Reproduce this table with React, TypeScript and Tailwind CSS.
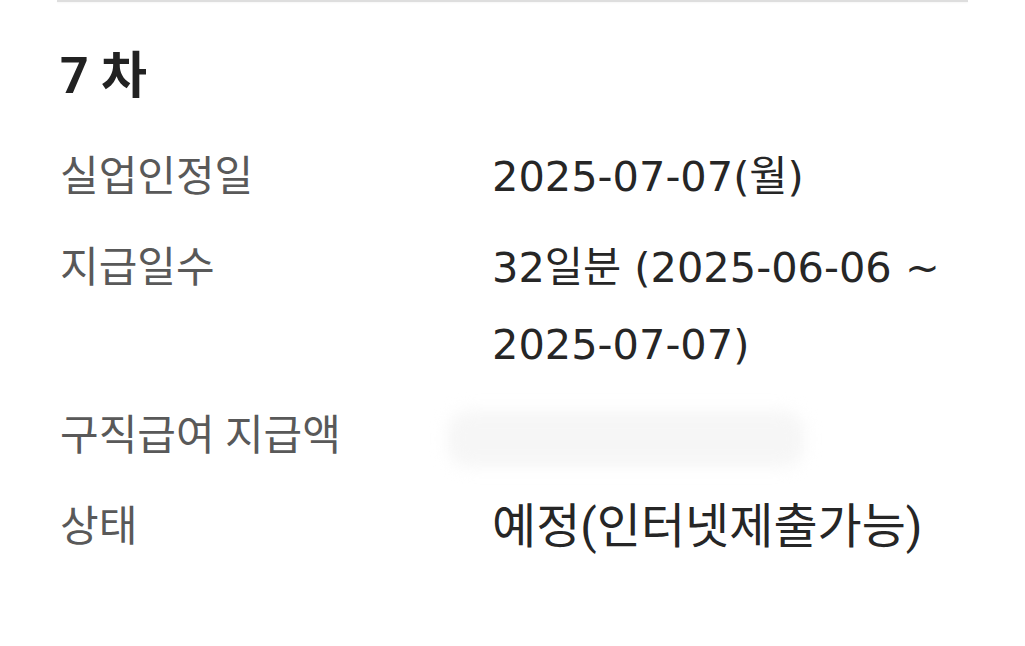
export default function App() {
  const rows: { label: string; value: React.ReactNode; big?: boolean; hidden?: boolean }[] = [
    { label: "실업인정일", value: "2025-07-07(월)" },
    {
      label: "지급일수",
      value: (
        <>
          32일분 (2025-06-06 ~
          <br />
          2025-07-07)
        </>
      ),
    },
    { label: "구직급여 지급액", value: "", hidden: true },
    { label: "상태", value: "예정(인터넷제출가능)", big: true },
  ];

  return (
    <div
      className="min-h-[646px] w-[1025px] bg-white"
      style={{ fontFamily: 'Roboto, "Noto Sans CJK KR", sans-serif' }}
    >
      <div className="mx-[57px] border-t-2 border-[#dedede] shadow-[0_1px_2px_rgba(0,0,0,0.04)]" />
      <div className="px-[60px]">
        <h2 className="mt-[38px] text-[50px] font-bold leading-[72px] text-[#222222]">7 차</h2>
        <div className="mt-[26px] flex flex-col gap-[14px]">
          {rows.map((row) => (
            <div key={row.label} className="grid grid-cols-[432px_1fr]">
              <div className="text-[42px] leading-[77px] text-[#595959]">{row.label}</div>
              {row.hidden ? (
                <div className="relative h-[77px]">
                  <div className="absolute left-[-44px] top-[14px] h-[56px] w-[356px] rounded-[20px] bg-[#f6f6f6] blur-sm" />
                </div>
              ) : (
                <div
                  className={
                    row.big
                      ? "text-[48px] leading-[77px] text-[#262626]"
                      : "font-['DejaVu_Sans','Noto_Sans_CJK_KR',sans-serif] text-[41.5px] leading-[77px] text-[#262626]"
                  }
                >
                  {row.value}
                </div>
              )}
            </div>
          ))}
        </div>
      </div>
    </div>
  );
}
